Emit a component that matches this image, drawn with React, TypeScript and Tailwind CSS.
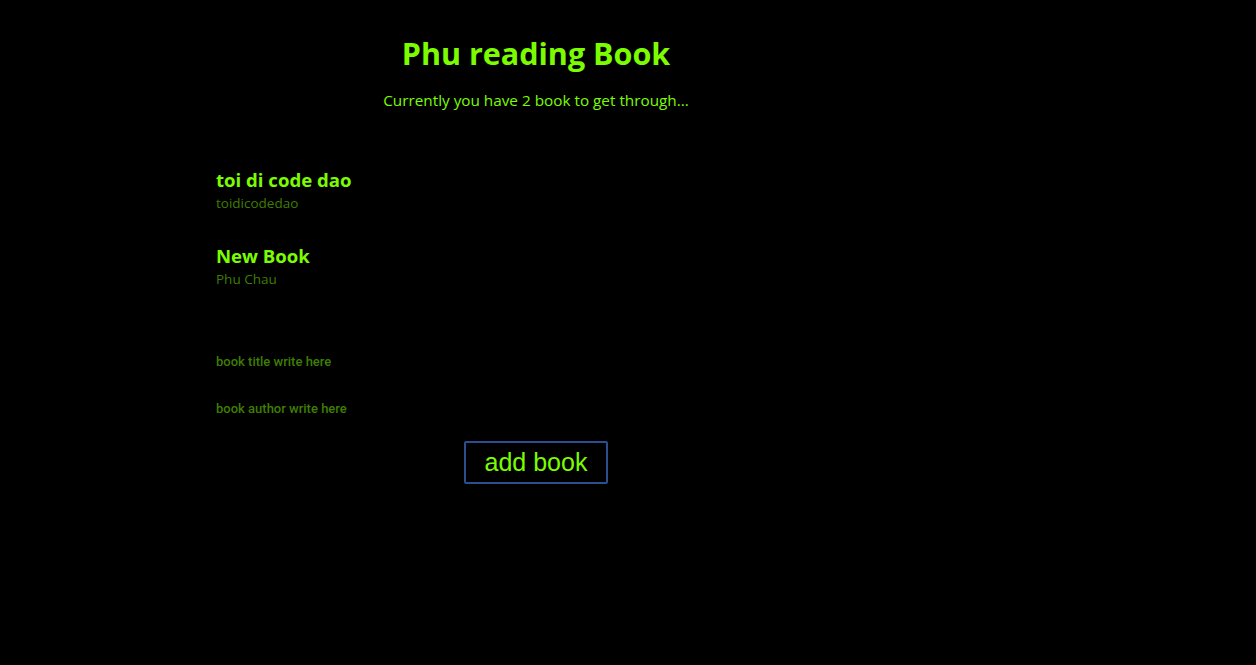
import React from "react";

const books = [
  { title: "toi di code dao", author: "toidicodedao" },
  { title: "New Book", author: "Phu Chau" },
];

export default function App() {
  return (
    <div className="min-h-[665px] w-full bg-black text-[#7cfc00]" style={{ fontFamily: '"Open Sans", "Noto Sans", sans-serif' }}>
      <div className="ml-[216px] w-[640px] pt-[33px]">
        <h1 className="text-center text-[30.5px] font-bold leading-[40px]">Phu reading Book</h1>
        <p className="mt-[17px] text-center text-[15.3px] leading-[20px]">Currently you have 2 book to get through...</p>
        <div className="mt-[58px] flex flex-col gap-[32px]">
          {books.map((b) => (
            <div key={b.title} className="flex flex-col">
              <span className="text-[18.6px] font-bold leading-[24px]">{b.title}</span>
              <span className="mt-[2px] text-[13.5px] leading-[18px] text-[#3e7e00]">{b.author}</span>
            </div>
          ))}
        </div>
        <div className="mt-[65px] flex flex-col gap-[29px]">
          <input
            placeholder="book title write here"
            className="h-[18px] w-[300px] bg-transparent text-[13px] font-medium text-[#3e7e00] outline-none placeholder:text-[#3e7e00]"
            style={{ fontFamily: 'Roboto, "Liberation Sans", sans-serif' }}
          />
          <input
            placeholder="book author write here"
            className="h-[18px] w-[300px] bg-transparent text-[13px] font-medium text-[#3e7e00] outline-none placeholder:text-[#3e7e00]"
            style={{ fontFamily: 'Roboto, "Liberation Sans", sans-serif' }}
          />
        </div>
        <div className="mt-[23px] flex justify-center">
          <button
            className="h-[43px] w-[144px] rounded-[2px] border-2 border-[#2c4d8e] bg-black text-[25px] text-[#7cfc00]"
            style={{ fontFamily: '"Liberation Sans", Arial, sans-serif' }}
          >
            add book
          </button>
        </div>
      </div>
    </div>
  );
}
